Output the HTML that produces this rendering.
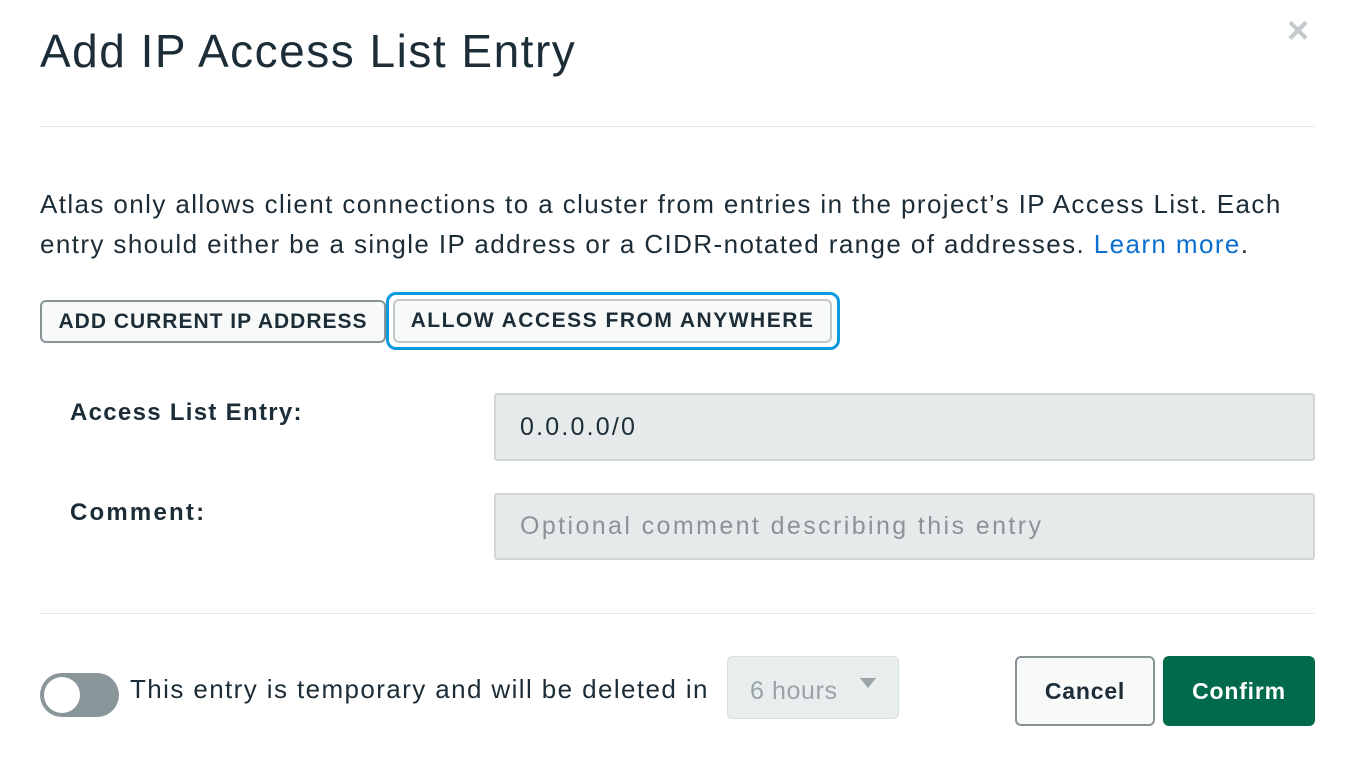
<!DOCTYPE html>
<html><head><style>
body{margin:0;width:1353px;height:762px;background:#fff;font-family:"Liberation Sans",sans-serif;color:#1c2d38;position:relative;overflow:hidden}
.a{position:absolute;white-space:nowrap}
.hr{position:absolute;left:40px;width:1274px;height:1px;background:#e3e7e7}
.btn{position:absolute;box-sizing:border-box;background:#f8f9f9;border-radius:6px;font-weight:bold;font-size:21px;display:flex;align-items:center;justify-content:center;color:#1c2d38}
.inp{position:absolute;box-sizing:border-box;background:#e7eaea;border:2px solid #d0d5d5;border-radius:3px;font-size:25px;padding-left:24px;display:flex;align-items:center}
</style></head><body>
<div class="a" style="left:40px;top:24px;font-size:46px;color:#1c2d38;letter-spacing:1.5px">Add IP Access List Entry</div>
<div class="a" style="left:1287px;top:10px;font-size:38px;color:#c5cacc;font-weight:bold">×</div>
<div class="hr" style="top:126px"></div>
<div class="a" style="left:40px;top:184px;font-size:26px;line-height:40px;color:#1c2d38;letter-spacing:1.4px">Atlas only allows client connections to a cluster from entries in the project’s IP Access List. Each<br>entry should either be a single IP address or a CIDR-notated range of addresses. <span style="color:#0b6fcf">Learn more</span>.</div>
<div class="btn" style="left:40px;top:300px;width:346px;height:43px;border:2px solid #889397;letter-spacing:1px">ADD CURRENT IP ADDRESS</div>
<div style="position:absolute;left:386px;top:292px;width:454px;height:58px;box-sizing:border-box;border:3px solid #0b9ae0;border-radius:10px"></div>
<div class="btn" style="left:393px;top:299px;width:439px;height:44px;border:2px solid #c2c7c7;letter-spacing:1.5px">ALLOW ACCESS FROM ANYWHERE</div>
<div class="a" style="left:70px;top:399px;font-size:24px;font-weight:bold;letter-spacing:1.3px">Access List Entry:</div>
<div class="inp" style="left:494px;top:393px;width:821px;height:68px;color:#1c2d38;letter-spacing:2.2px">0.0.0.0/0</div>
<div class="a" style="left:70px;top:499px;font-size:24px;font-weight:bold;letter-spacing:2.2px">Comment:</div>
<div class="inp" style="left:494px;top:493px;width:821px;height:67px;color:#8a9396;letter-spacing:2.4px">Optional comment describing this entry</div>
<div class="hr" style="top:613px"></div>
<div style="position:absolute;left:40px;top:673px;width:79px;height:44px;border-radius:22px;background:#89979b"></div>
<div style="position:absolute;left:44px;top:677px;width:36px;height:36px;border-radius:18px;background:#fff"></div>
<div class="a" style="left:130px;top:674px;font-size:26px;letter-spacing:1.4px">This entry is temporary and will be deleted in</div>
<div style="position:absolute;left:727px;top:656px;width:172px;height:63px;box-sizing:border-box;background:#e7eeed;border:1px solid #d8e0e0;border-radius:5px"></div>
<div class="a" style="left:750px;top:677px;font-size:25px;color:#9aa3a5;letter-spacing:0.6px">6 hours</div>
<div style="position:absolute;left:860px;top:678px;width:0;height:0;border-left:8px solid transparent;border-right:8px solid transparent;border-top:10px solid #9aa3a5"></div>
<div class="btn" style="left:1015px;top:656px;width:140px;height:70px;border:2px solid #889397;font-size:23px;font-weight:bold;letter-spacing:0.8px">Cancel</div>
<div class="btn" style="left:1163px;top:656px;width:152px;height:70px;background:#006a4b;color:#fff;font-size:23px;border-radius:6px;letter-spacing:0.8px">Confirm</div>
</body></html>
